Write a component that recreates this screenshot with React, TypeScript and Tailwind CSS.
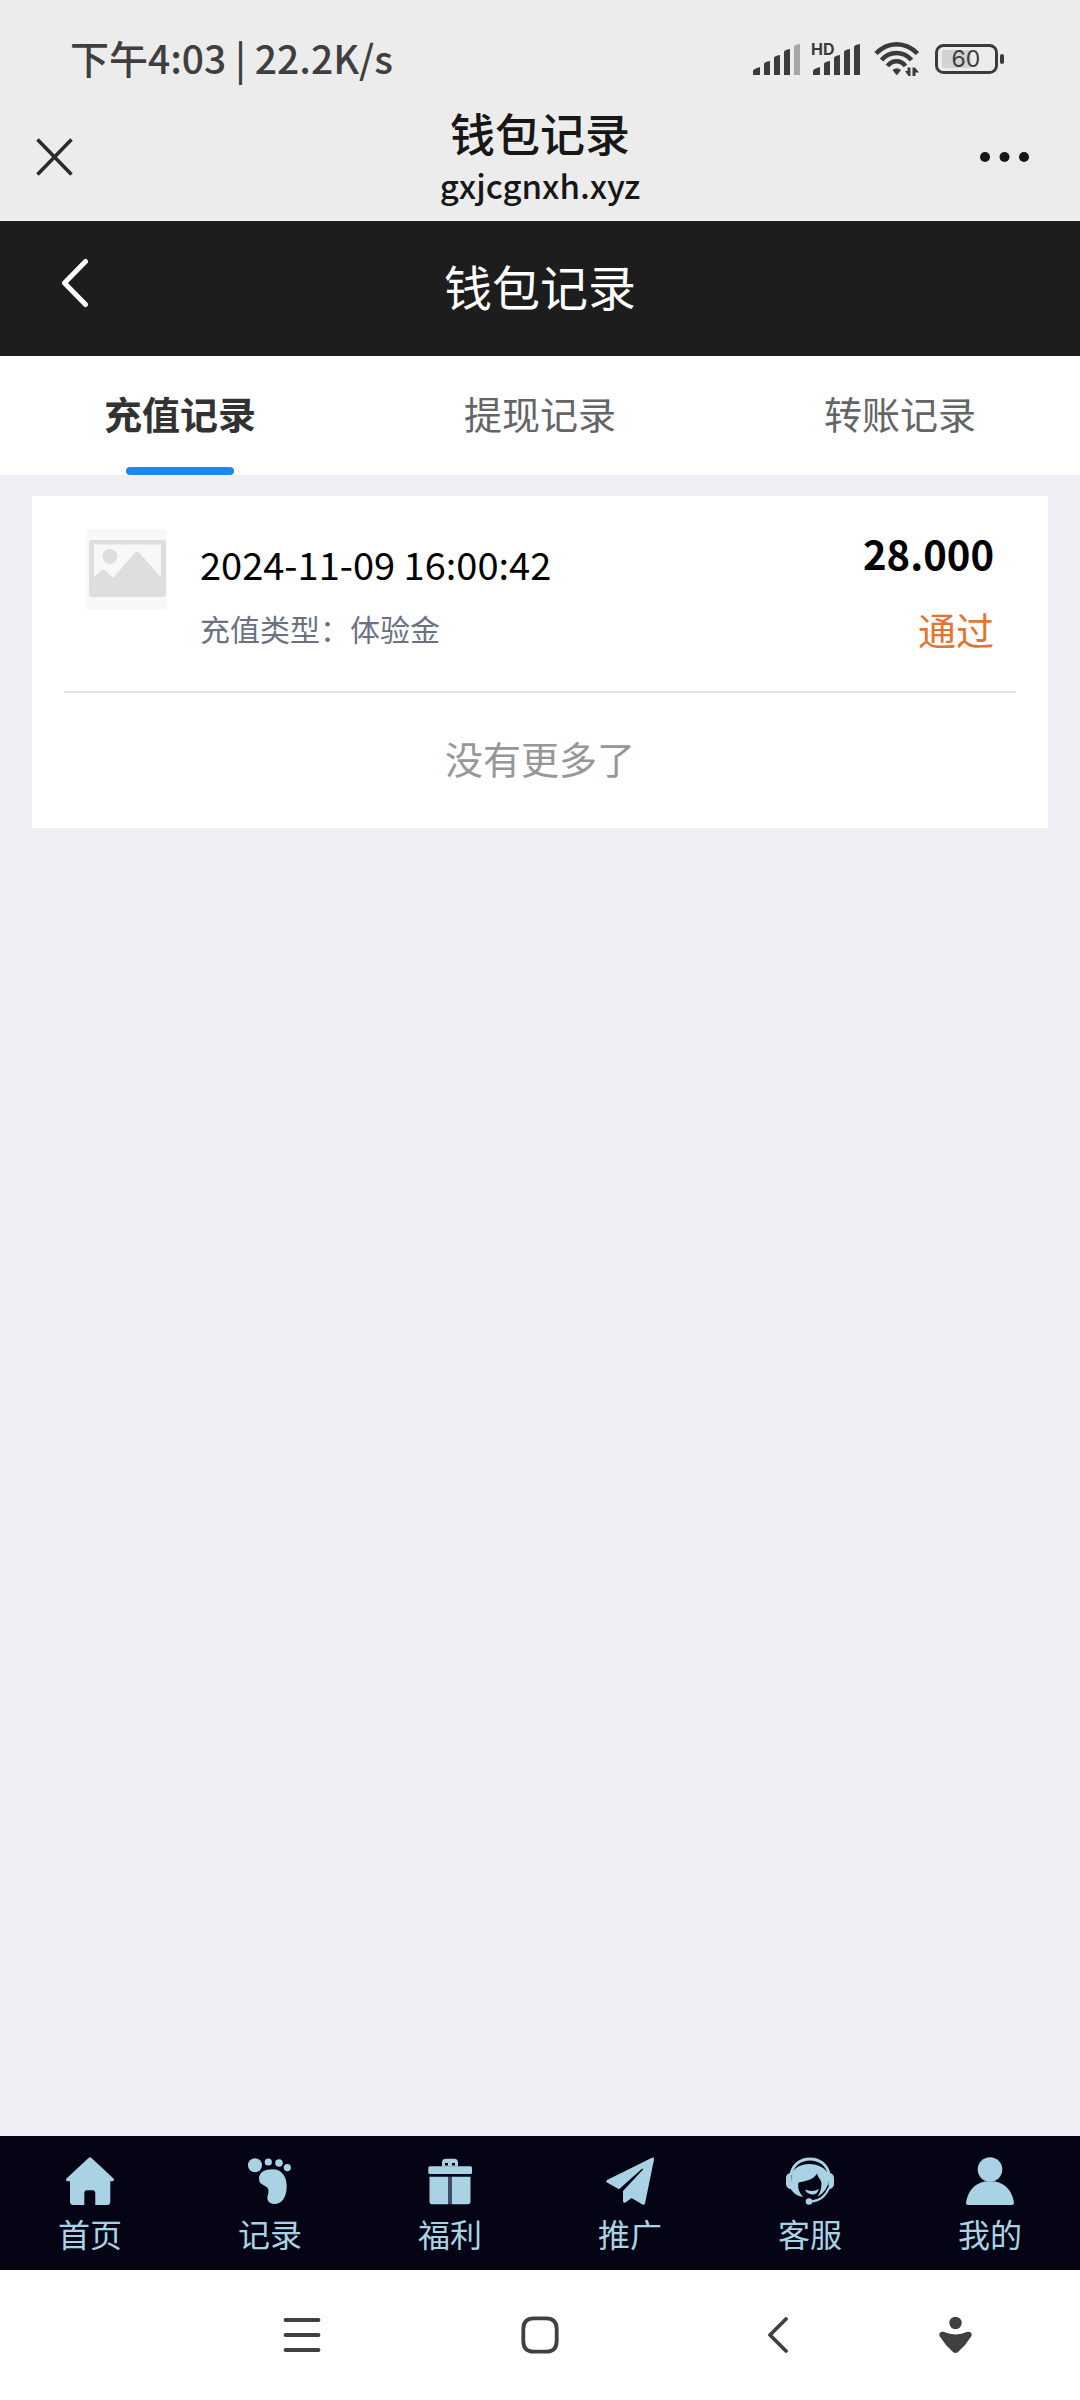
import { useState } from 'react';
import type { ReactNode } from 'react';

// ---------------------------------------------------------------------------
// Data
// ---------------------------------------------------------------------------
const TABS = ['充值记录', '提现记录', '转账记录'] as const;
type Tab = (typeof TABS)[number];

interface WalletRecord {
  time: string;
  type: string;
  amount: string;
  status: string;
}

const RECORDS: Record<Tab, WalletRecord[]> = {
  充值记录: [{ time: '2024-11-09 16:00:42', type: '体验金', amount: '28.000', status: '通过' }],
  提现记录: [],
  转账记录: [],
};

// ---------------------------------------------------------------------------
// Status bar icons
// ---------------------------------------------------------------------------
const BARS = [
  'M0 31V27Q0 25 7 23V31Z',
  'M11 31V20Q11 18 17 17V31Z',
  'M21 31V14Q21 12 27 11V31Z',
  'M31 31V8Q31 6 37 5V31Z',
  'M41 31V3Q41 1 47 0V31Z',
];

function Signal({ weak = false, hd = false }: { weak?: boolean; hd?: boolean }) {
  return (
    <svg width="50" height="34" viewBox="0 0 50 34" fill="#3b3b3b" className="overflow-visible" aria-hidden="true">
      <g transform="translate(1 2)">
        {BARS.map((d, i) => (
          <path key={d} d={d} fill={weak && i === 4 ? '#a6a6a6' : '#3b3b3b'} />
        ))}
      </g>
      {hd && (
        <text x="-1" y="13" className="font-[Inter,sans-serif] text-[16px] font-bold">HD</text>
      )}
    </svg>
  );
}

function Wifi() {
  return (
    <svg width="47" height="36" viewBox="0 0 47 36" fill="none" stroke="#3b3b3b" strokeWidth="4.5" aria-hidden="true">
      <path d="M2 12.5C13.5 0 31.500 0 43.500 12.500" />
      <path d="M7.500 19C15.500 9.500 29.500 9.500 37.500 19" />
      <path d="M13.500 25C18 18.500 27 18.500 31.500 25" />
      <path d="M18.500 29Q22.700 25.500 27 29L23.500 33.500Q22.700 34.300 22 33.500Z" fill="#3b3b3b" stroke="none" />
      <path d="M33.500 26.500H36.500V35H34.500L31 30H33.500ZM38.500 35V26.500H41L45 31.500H41.500V35Z" fill="#3b3b3b" stroke="none" />
    </svg>
  );
}

function Battery() {
  return (
    <svg width="69" height="32" viewBox="0 0 69 32" className="overflow-visible" aria-hidden="true">
      <rect x="7" y="7" width="29" height="18" rx="3" fill="#d2d2d2" />
      <rect x="1.500" y="2.500" width="60" height="27" rx="7" fill="none" stroke="#3b3b3b" strokeWidth="3" />
      <rect x="65" y="11" width="4" height="10" rx="2" fill="#3b3b3b" />
      <text x="31" y="24" textAnchor="middle" fill="#3b3b3b" className="font-[Inter,sans-serif] text-[23px]">60</text>
    </svg>
  );
}

// ---------------------------------------------------------------------------
// Bottom menu
// ---------------------------------------------------------------------------
const MENU: { label: string; icon: ReactNode }[] = [
  {
    label: '首页',
    icon: (
      <path d="M22.500 1Q24 -.300 25.500 1L47.500 21.500Q49 24.300 46 24.300H44.300V44.500Q44.300 48 41 48H29.300V36.500Q29.300 33.300 26.500 33.300H21Q18.300 33.300 18.300 36.500V48H7.500Q4 48 4 44.500V24.300H2Q-1 24.300 .500 21.500Z" />
    ),
  },
  {
    label: '记录',
    icon: (
      <g transform="translate(2 0)">
        <circle cx="7" cy="8.300" r="7" />
        <circle cx="20.300" cy="5" r="3.600" />
        <circle cx="31" cy="6" r="3.800" />
        <circle cx="39.300" cy="10.600" r="3.600" />
        <path d="M11 22C11 15 17 12.300 24.700 12.300C34 12.300 38.700 20 38.700 29C38.700 40 34 47 26.300 47C21 47 18.500 43 19.600 39C21.500 33 20.500 30.500 16 28.500C13 27 11 25.500 11 22Z" />
      </g>
    ),
  },
  {
    label: '福利',
    icon: (
      <>
        <path d="M16 9.500V5.500Q16 1.700 20 1.700H28Q32 1.700 32 5.500V9.500ZM19 6V8.500H22V6ZM26 6V8.500H29V6Z" fillRule="evenodd" />
        <rect x="2.300" y="9.300" width="43.700" height="7.700" rx="1.500" />
        <path d="M22 19.700H26V47.300H22Z" fill="#3f4e60" />
        <path d="M3.500 19.700H22V47.300H6Q3.500 47.300 3.500 44.500ZM26 19.700H44.500V44.500Q44.500 47.300 42 47.300H26Z" />
      </>
    ),
  },
  {
    label: '推广',
    icon: (
      <path d="M46 .800Q48.500 -.300 48 2.500L39 46.500Q38.300 48.500 36.500 47.500L25.500 41L19.500 45.500Q17 46.500 17 44V34L37 12.500Q37 11 36 11.700L13 32.300L1 25.500Q-.700 24 1 23Z" />
    ),
  },
  {
    label: '客服',
    icon: (
      <>
        <path d="M5 18C7.500 -3.500 40.500 -3.500 43 18" fill="none" stroke="currentColor" strokeWidth="3" />
        <path d="M5.500 16V32H4Q0 30.500 0 27V21Q0 17 4 16ZM42.500 16H44Q48 17 48 21V27Q48 30.500 44 32H42.500Z" />
        <path d="M4.500 31.500C8 37 11 39 17.500 40C13 36 11.500 31 12.500 25.500C19 24 27 23.500 31 16.500C32 21 35 22 35.500 26C35.500 32 34 36 31.500 39.500C38 36 41 31.500 43 24V19C38 3.500 10 3.500 6 17Z" />
        <path d="M19 32.500Q26 35.500 33 32Q31 38 26 37.500Q21 37 19 32.500Z" />
        <path d="M43 31C39.500 39 34 44 25 44.500" fill="none" stroke="currentColor" strokeWidth="2" />
        <circle cx="23" cy="44.500" r="3.300" />
      </>
    ),
  },
  {
    label: '我的',
    icon: (
      <>
        <circle cx="24" cy="12.500" r="12.300" />
        <path d="M2 48Q0 48 0 45.500C2 33.500 9 26.500 18.500 24.500H29.500C39 26.500 46 33.500 48 45.500Q48 48 46 48Z" />
      </>
    ),
  },
];

// ---------------------------------------------------------------------------
// Sections
// ---------------------------------------------------------------------------
function BrowserTop() {
  return (
    <div className="bg-[#ececec] pb-3">
      <div className="flex items-center justify-between pt-10 pl-[70px] pr-[76px]">
        <div className="pb-1 text-[39px] leading-[34px] font-medium text-[#3f3f3f]">下午4:03 | 22.2K/s</div>
        <div className="flex items-center">
          <Signal weak />
          <div className="ml-[10px] mr-3 flex"><Signal hd /></div>
          <Wifi />
          <div className="ml-[14px] flex"><Battery /></div>
        </div>
      </div>

      <div className="mt-8 grid grid-cols-[1fr_auto_1fr] items-center text-[#171717]">
        <button type="button" aria-label="关闭" className="ml-9 justify-self-start pb-1">
          <svg width="37" height="38" viewBox="0 0 37 38" fill="none" stroke="#2b2b2b" strokeWidth="3.600">
            <path d="M1.500 1.500L35.500 36.500M35.500 1.500L1.500 36.500" />
          </svg>
        </button>
        <div className="text-center">
          <div className="text-[45px] leading-[46px] font-medium">钱包记录</div>
          <div className="mt-2 pb-0.5 text-[33px] leading-[42px] font-medium">gxjcgnxh.xyz</div>
        </div>
        <button type="button" aria-label="更多" className="mr-[50px] justify-self-end pb-1">
          <svg width="50" height="10" viewBox="0 0 50 10" fill="#171717">
            <circle cx="5" cy="5" r="5" />
            <circle cx="24.500" cy="5" r="5" />
            <circle cx="44" cy="5" r="5" />
          </svg>
        </button>
      </div>
    </div>
  );
}

function RecordItem({ record }: { record: WalletRecord }) {
  return (
    <li className="flex items-start border-b-2 border-[#e6e6e6] pt-8 pb-[38px] pl-[22px] pr-[22px]">
      <svg width="81" height="81" viewBox="0 0 81 81" className="mt-px shrink-0 bg-[#f7f8fa]" aria-hidden="true">
        <path
          d="M6 11H77Q80 11 80 14V65Q80 68 77 68H6Q3 68 3 65V14Q3 11 6 11ZM8 15.500V48.500L15.500 41Q17.200 40 19 41L27 49L49 23.500Q51 21.500 53 23.500L75 48.500V15.500Z"
          fill="#dcdee0"
          fillRule="evenodd"
        />
        <circle cx="24" cy="27.500" r="7.500" fill="#dcdee0" />
      </svg>
      <div className="ml-[33px] flex-1 pt-3">
        <div className="text-[38px] leading-12 text-black">{record.time}</div>
        <div className="mt-5 text-[30px] leading-10 text-gray-500">充值类型：{record.type}</div>
      </div>
      <div className="pt-px text-right">
        <div className="text-[40px] leading-12 font-bold text-black">{record.amount}</div>
        <div className="mt-7 text-[38px] leading-12 text-[#e0762f]">{record.status}</div>
      </div>
    </li>
  );
}

function SystemNav() {
  return (
    <div className="grid h-[130px] grid-cols-[17fr_22fr_22fr_22fr_11fr_6fr] items-center justify-items-center bg-white text-[#404040]">
      <button type="button" aria-label="最近任务" className="col-start-2">
        <svg width="38" height="38" viewBox="0 0 38 38" fill="none" stroke="currentColor" strokeWidth="3.800" strokeLinecap="round">
          <path d="M2.500 4H35.500M2.500 19H35.500M2.500 34H35.500" />
        </svg>
      </button>
      <button type="button" aria-label="主屏幕">
        <svg width="38" height="38" viewBox="0 0 38 38" fill="none" stroke="currentColor" strokeWidth="3.800">
          <path d="M2.300 13Q2.300 2.300 13 2.300H25Q35.700 2.300 35.700 13V25Q35.700 35.700 25 35.700H13Q2.300 35.700 2.300 25Z" />
        </svg>
      </button>
      <button type="button" aria-label="返回上一页">
        <svg width="20" height="38" viewBox="0 0 20 38" fill="none" stroke="currentColor" strokeWidth="3.800" strokeLinecap="round" strokeLinejoin="round">
          <path d="M18 3L2 19L18 35" />
        </svg>
      </button>
      <button type="button" aria-label="快捷助手">
        <svg width="33" height="38" viewBox="0 0 33 38" fill="currentColor">
          <circle cx="16.500" cy="7" r="6.200" />
          <path d="M4.500 15.800Q16.500 21 28.500 15.800Q33.500 15.500 32.500 20Q27 29 19 36Q16.500 38 14 36Q6 29 .500 20Q-.500 15.500 4.500 15.800Z" />
        </svg>
      </button>
    </div>
  );
}

// ---------------------------------------------------------------------------
// Page
// ---------------------------------------------------------------------------
export default function App() {
  const [activeTab, setActiveTab] = useState<Tab>('充值记录');

  return (
    <div className="flex min-h-screen flex-col bg-[#efeef4] font-['Noto_Sans_CJK_SC',sans-serif]">
      <BrowserTop />

      {/* Page header */}
      <header className="grid grid-cols-[1fr_auto_1fr] items-center border-t border-[#f4f4f4] bg-[#1d1d1d] pt-8 pb-[43px] text-white">
        <button type="button" aria-label="返回" className="ml-[60px] justify-self-start">
          <svg width="30" height="50" viewBox="0 0 30 50" fill="none" stroke="currentColor" strokeWidth="5" strokeLinecap="round" strokeLinejoin="round">
            <path d="M25.500 3.500L4.500 25L25.500 46.500" />
          </svg>
        </button>
        <h1 className="pt-1 text-[48px] leading-14">钱包记录</h1>
      </header>

      {/* Record type tabs */}
      <div role="tablist" className="flex bg-white">
        {TABS.map((tab) => (
          <button
            key={tab}
            type="button"
            role="tab"
            aria-selected={tab === activeTab}
            onClick={() => setActiveTab(tab)}
            className={`flex flex-1 flex-col items-center pt-[30px] text-[38px] leading-[54px] ${
              tab === activeTab ? 'font-bold text-[#323233]' : 'text-[#646566]'
            }`}
          >
            {tab}
            <span className={`mt-[27px] h-2 w-[108px] rounded-full ${tab === activeTab ? 'bg-[#1d87f0]' : ''}`} />
          </button>
        ))}
      </div>

      {/* Record list */}
      <main className="flex-1 px-8 pt-[21px]">
        <div className="bg-white px-8">
          <ul>
            {RECORDS[activeTab].map((record) => (
              <RecordItem key={record.time} record={record} />
            ))}
          </ul>
          <p className="pt-[38px] pb-[43px] text-center text-[38px] leading-[54px] text-[#969799]">没有更多了</p>
        </div>
      </main>

      {/* Bottom menu */}
      <nav className="flex bg-[#040414] pt-5 pb-[15px] text-[#a9d3e4]">
        {MENU.map(({ label, icon }) => (
          <a key={label} href="#" className="flex flex-1 flex-col items-center">
            <svg width="50" height="50" viewBox="-1 -1 50 50" fill="currentColor" aria-hidden="true">
              {icon}
            </svg>
            <span className="mt-[5px] text-[32px] leading-11">{label}</span>
          </a>
        ))}
      </nav>

      <SystemNav />
    </div>
  );
}
